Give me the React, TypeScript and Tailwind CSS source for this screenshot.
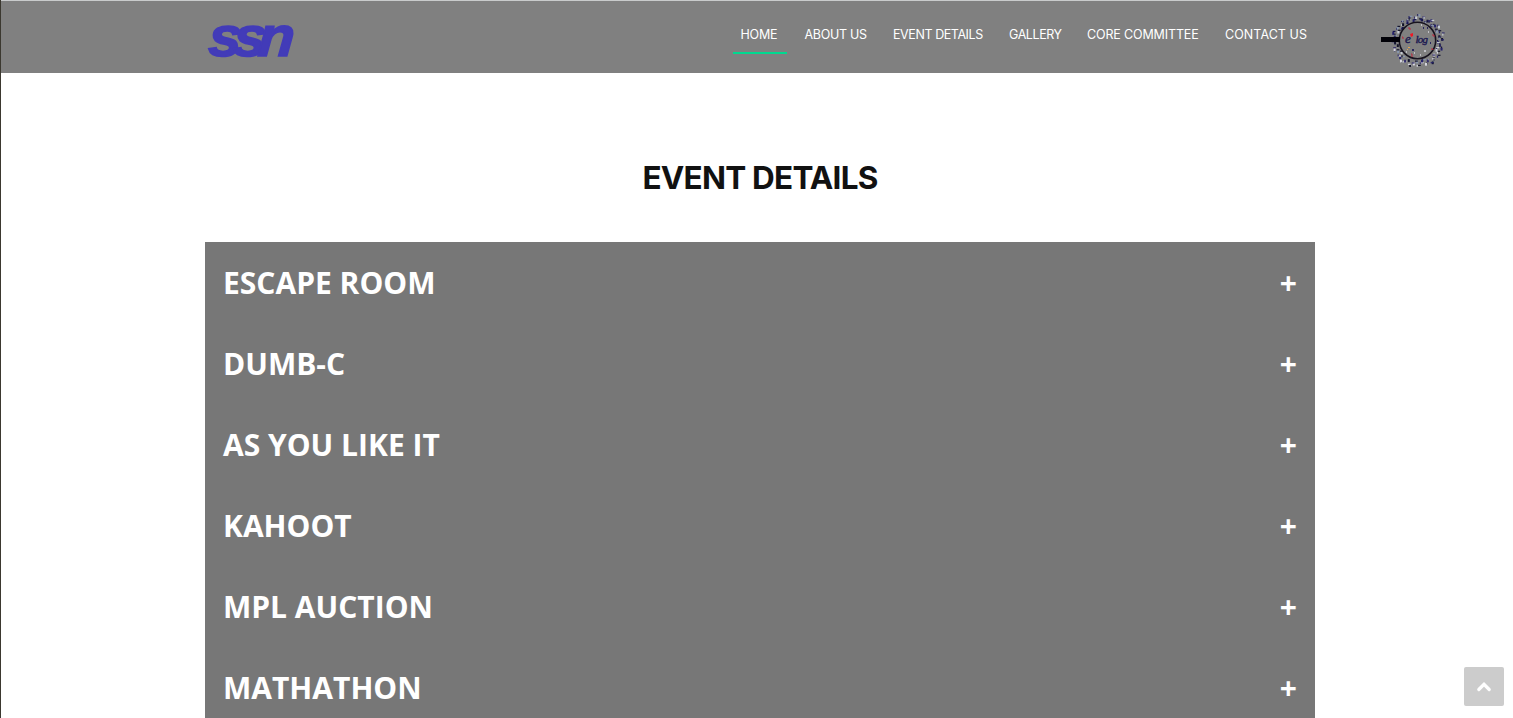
const NAV = [
  { label: "HOME", width: "w-[54px]", spacing: "tracking-[-0.2px]" },
  { label: "ABOUT US", width: "w-[78.5px]", spacing: "tracking-[-0.3px]" },
  { label: "EVENT DETAILS", width: "w-[106px]", spacing: "tracking-[-0.42px]" },
  { label: "GALLERY", width: "w-[68px]", spacing: "tracking-[-0.42px]" },
  { label: "CORE COMMITTEE", width: "w-[128px]", spacing: "tracking-[-0.14px]" },
  { label: "CONTACT US", width: "w-[99.5px]", spacing: "tracking-[0.07px]" },
];

const EVENTS = ["ESCAPE ROOM", "DUMB-C", "AS YOU LIKE IT", "KAHOOT", "MPL AUCTION", "MATHATHON"];

const COLORS = ["#17164f", "#24216b", "#14142e", "#8796ad", "#2b2860", "#111125", "#c5cbd4", "#35306e"];

function SsnLogo() {
  return (
    <svg width="96" height="72" viewBox="0 0 96 72" aria-label="ssn">
      <text
        transform="translate(2.5 55) skewX(-4) scale(1.07 1)"
        x="0"
        y="0"
        textLength="80.5"
        fill="#423bb8"
        stroke="#423bb8"
        strokeWidth="1.6"
        fontFamily="Liberation Sans, sans-serif"
        fontWeight="700"
        fontStyle="italic"
        fontSize="56"
      >
        ssn
      </text>
    </svg>
  );
}

function ElogLogo() {
  const marks = Array.from({ length: 125 }, (_, i) => {
    const angle = i * 2.39996;
    const r = 20 + ((i * 7) % 11) * 0.6;
    const lower = Math.sin(angle) > 0.2;
    const color = lower && i % 4 === 0 ? "#d6d6df" : COLORS[i % COLORS.length];
    return (
      <rect
        key={i}
        x={37 + r * Math.cos(angle)}
        y={28 + r * Math.sin(angle)}
        width={1.2 + (i % 3) * 0.8}
        height={1.2 + ((i + 1) % 3) * 0.8}
        fill={color}
      />
    );
  });
  return (
    <svg width="70" height="58" viewBox="0 0 70 58" aria-label="e log">
      {marks}
      <circle cx="37.5" cy="28.5" r="18.2" fill="none" stroke="#17131f" strokeWidth="1.6" />
      <rect x="1" y="25" width="19" height="5" fill="#020208" />
      <g fontFamily="Liberation Serif, serif" fontStyle="italic" fill="#19164f" stroke="#19164f" strokeWidth="0.35">
        <text x="25" y="31" fontSize="13">e</text>
        <text x="35.5" y="31" fontSize="11" textLength="12.5">log</text>
      </g>
      <path d="M30 22l3-1v3l-2 1z" fill="#f01825" />
      <path d="M28 16h2v2M52 23h2v2M31 42h1v3M51 37h2v1M22 25h1v2" stroke="#b8283d" strokeWidth="1" fill="none" />
      <path d="M28 35.5h2M27 37.5h1" stroke="#e1a451" strokeWidth="1" />
      <path d="M41 13h1M48 20h1M34 41h1M44 39h2M26 40h1M40 43h1" stroke="#d3d3db" strokeWidth="1.5" />
      <path d="M43 16h1M32 38h2M50 31h1M47 16h1" stroke="#29265d" strokeWidth="2" />
    </svg>
  );
}

export default function App() {
  return (
    <div className="relative flex h-[718px] w-full flex-col overflow-hidden border-l border-[#3b382f] bg-white font-['Inter',sans-serif]">
      <header className="flex h-[73px] shrink-0 items-start border-t border-[#c9cbcc] bg-[#808080] pl-[204px]">
        <div className="w-[90px]">
          <SsnLogo />
        </div>
        <nav className="ml-[438px] mt-[12px] flex gap-[10px]">
          {NAV.map((item, i) => (
            <a
              key={item.label}
              href="#"
              className={`flex h-[41px] items-center whitespace-nowrap border-b-2 pl-[7.5px] pt-[5px] text-[12.5px] text-white ${item.width} ${item.spacing} ${i === 0 ? "border-[#00d990]" : "border-transparent"}`}
            >
              <span>{item.label}</span>
            </a>
          ))}
        </nav>
        <div className="ml-[63px] mt-[11px]">
          <ElogLogo />
        </div>
      </header>

      <main className="flex flex-col pl-[204px]">
        <h2 className="flex h-[169px] w-[1110px] items-center justify-center pt-[41px] text-[31.5px] font-bold tracking-[-0.78px] text-[#111111]">
          <span>EVENT DETAILS</span>
        </h2>
        <div className="w-[1110px] bg-[#777777]">
          {EVENTS.map((name) => (
            <button
              key={name}
              className="flex h-[81px] w-full items-center justify-between px-[18px] font-['Open_Sans',sans-serif] text-[30px] font-bold text-white"
            >
              <span>{name}</span>
              <span>+</span>
            </button>
          ))}
        </div>
      </main>

      <button aria-label="Back to top" className="absolute left-[1463px] top-[667px] flex h-[39px] w-[40px] items-center justify-center rounded-[2px] bg-[#cccccc]">
        <svg width="16" height="12" viewBox="0 0 16 12" fill="none" stroke="white" strokeWidth="3.2" strokeLinecap="round">
          <path d="M2.8 8.5L8 3.3l5.2 5.2" />
        </svg>
      </button>
    </div>
  );
}
